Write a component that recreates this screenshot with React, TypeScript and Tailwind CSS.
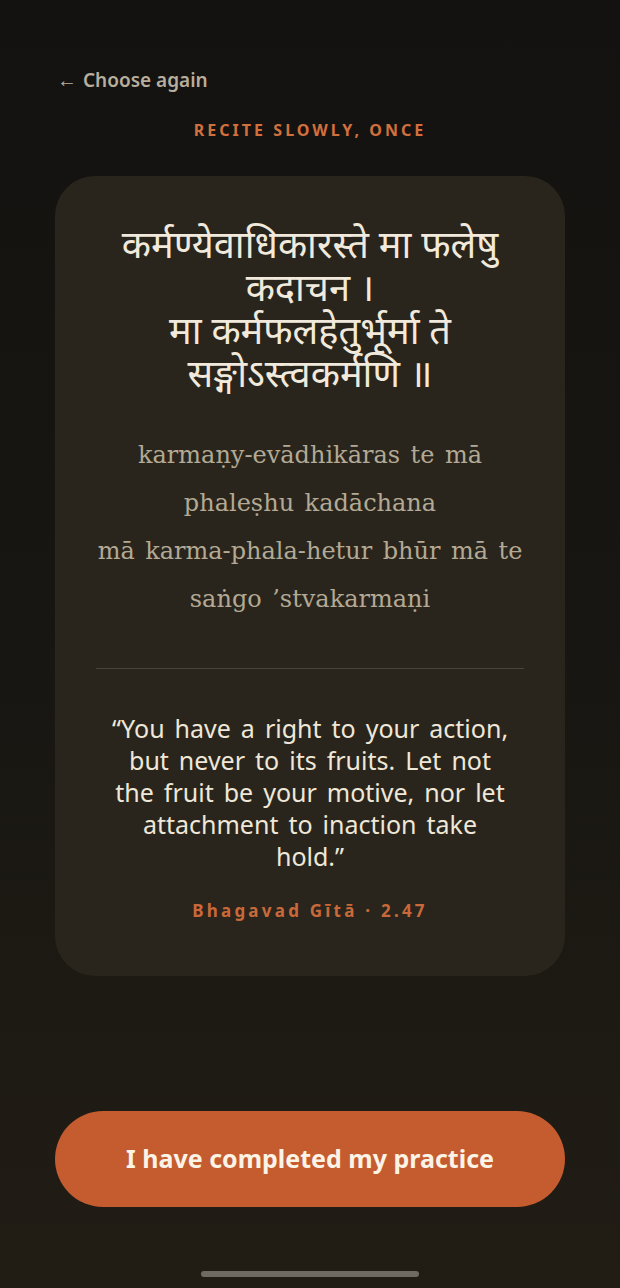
import React from "react";

export default function App() {
  return (
    <div
      className="w-[620px] h-[1288px] flex flex-col bg-gradient-to-b from-[#141210] via-[#181612] to-[#211d15]"
      style={{ fontFamily: '"Noto Sans", "Open Sans", sans-serif' }}
    >
      <div className="pt-[67px] pl-[57px] h-[26px] box-content flex items-center gap-[6px] text-[#b7ae9d]">
        <span className="text-[20px] leading-[26px]">←</span>
        <span className="text-[19px] leading-[26px] font-semibold">Choose again</span>
      </div>
      <div className="mt-[27px] text-center text-[16px] leading-[20px] font-bold tracking-[0.19em] text-[#d2703d]">
        RECITE SLOWLY, ONCE
      </div>
      <div className="mt-[36px] mx-[55px] rounded-[40px] bg-[#29251c] px-[30px] pt-[52px] pb-[55px] flex flex-col items-center">
        <div
          className="text-center text-[38px] leading-[43px] text-[#f1eadc] whitespace-nowrap"
          style={{ fontFamily: '"Noto Sans Devanagari", "Noto Sans", "Lohit Devanagari", sans-serif' }}
        >
          कर्मण्येवाधिकारस्ते मा फलेषु
          <br />
          कदाचन ।
          <br />
          मा कर्मफलहेतुर्भूर्मा ते
          <br />
          सङ्गोऽस्त्वकर्मणि ॥
        </div>
        <div
          className="mt-[31px] text-center text-[24px] leading-[48px] text-[#b3a994] [word-spacing:0.12em] whitespace-nowrap"
          style={{ fontFamily: '"DejaVu Serif", "Liberation Serif", serif' }}
        >
          karmaṇy-evādhikāras te mā
          <br />
          phaleṣhu kadāchana
          <br />
          mā karma-phala-hetur bhūr mā te
          <br />
          saṅgo ’stvakarmaṇi
        </div>
        <div className="mt-[45px] w-[428px] h-px bg-[#4a4538]" />
        <div className="mt-[43px] text-center text-[25px] leading-[32px] text-[#efe7d8] [word-spacing:0.14em] whitespace-nowrap">
          “You have a right to your action,
          <br />
          but never to its fruits. Let not
          <br />
          the fruit be your motive, nor let
          <br />
          attachment to inaction take
          <br />
          hold.”
        </div>
        <div className="mt-[29px] text-center text-[17px] leading-[20px] font-bold tracking-[0.19em] text-[#c9693a]">
          Bhagavad Gītā · 2.47
        </div>
      </div>
      <div className="flex-1" />
      <div className="mx-[55px] h-[96px] rounded-full bg-[#c45c30] flex items-center justify-center">
        <span className="text-[25px] font-bold text-[#fbf3e6]">I have completed my practice</span>
      </div>
      <div className="mt-[64px] mb-[11px] mx-auto w-[218px] h-[6px] rounded-full bg-[#6e6a61]" />
    </div>
  );
}
